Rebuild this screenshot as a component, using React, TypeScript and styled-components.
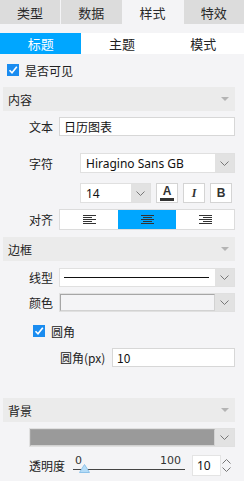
import React from "react"
import styled, { createGlobalStyle } from "styled-components"

const GlobalStyle = createGlobalStyle`
  html, body {
    margin: 0;
    padding: 0;
    background: #f4f4f6;
  }
  body {
    font-family: "Noto Sans CJK SC", "Noto Sans", sans-serif;
    font-size: 12px;
    color: #333;
  }
`

const Page = styled.div`
  width: 244px;
  height: 481px;
  overflow: hidden;
  background: #f4f4f6;
`

const Tabs = styled.div`
  display: grid;
  grid-template-columns: repeat(4, 1fr);
  column-gap: 1px;
  height: 24px;
`

const Tab = styled.div<{ $active?: boolean }>`
  display: flex;
  align-items: center;
  justify-content: center;
  font-size: 13px;
  color: #2a2a2a;
  background: ${(p) => (p.$active ? "transparent" : "#dcdcdc")};
`

const SubTabs = styled.div`
  display: grid;
  grid-template-columns: repeat(3, 1fr);
  height: 21px;
  margin-top: 9px;
`

const SubTab = styled.div<{ $active?: boolean }>`
  display: flex;
  align-items: center;
  justify-content: center;
  font-size: 13px;
  background: ${(p) => (p.$active ? "#00a6ff" : "#ffffff")};
  color: ${(p) => (p.$active ? "#ffffff" : "#222")};
`

const Panel = styled.div`
  width: 235px;
  display: flex;
  flex-direction: column;
`

const Row = styled.div<{ $mt: number; $h: number; $pl?: number }>`
  display: flex;
  align-items: center;
  margin-top: ${(p) => p.$mt}px;
  height: ${(p) => p.$h}px;
  padding-left: ${(p) => p.$pl ?? 29}px;
`

const Label = styled.span<{ $w: number }>`
  flex: 0 0 ${(p) => p.$w}px;
  font-size: 12px;
  color: #222;
  white-space: nowrap;
`

const CheckLabel = styled.label`
  display: flex;
  align-items: center;
  gap: 6px;
  font-size: 12px;
  color: #222;
`

const Box = styled.span`
  width: 12px;
  height: 12px;
  background: #1a8cf0;
  display: flex;
  align-items: center;
  justify-content: center;
`

const Header = styled.div<{ $mt: number }>`
  margin: ${(p) => p.$mt}px 0 0 3px;
  height: 24px;
  background: #ebebeb;
  display: flex;
  align-items: center;
  justify-content: space-between;
  padding: 0 6px 0 5px;
  font-size: 12px;
  color: #222;
`

const Caret = styled.span`
  width: 0;
  height: 0;
  border-left: 4px solid transparent;
  border-right: 4px solid transparent;
  border-top: 4px solid #b4b4b4;
`

const TextInput = styled.div`
  flex: 1;
  height: 100%;
  box-sizing: border-box;
  border: 1px solid #d7d7d7;
  background: #fff;
  display: flex;
  align-items: center;
  padding-left: 4px;
  font-size: 12px;
  color: #111;
`

const Select = styled.div<{ $w?: number }>`
  ${(p) => (p.$w ? `flex: 0 0 ${p.$w}px;` : "flex: 1;")}
  height: 100%;
  box-sizing: border-box;
  display: flex;
  background: #fff;
  border: 1px solid #e0e0e0;
`

const SelectValue = styled.div`
  flex: 1;
  display: flex;
  align-items: center;
  padding-left: 5px;
  font-family: "Noto Sans", "Noto Sans CJK SC", sans-serif;
  font-size: 12px;
  color: #111;
  overflow: hidden;
`

const SelectArrow = styled.div`
  flex: 0 0 19px;
  background: #e2e2e2;
  display: flex;
  align-items: center;
  justify-content: center;
`

const Swatch = styled.div<{ $color: string }>`
  flex: 1;
  background: ${(p) => p.$color};
  border: 1px solid;
  border-color: #a6a6a6 #d2d2d2 #d2d2d2 #a6a6a6;
`

const LineSample = styled.div`
  flex: 1;
  display: flex;
  align-items: center;
  padding: 0 6px 0 4px;
  &::before {
    content: "";
    flex: 1;
    border-top: 1px solid #111;
  }
`

const StyleButton = styled.div`
  flex: 0 0 22px;
  height: 100%;
  margin-left: 5px;
  box-sizing: border-box;
  border: 1px solid #d4d4d4;
  background: #fff;
  display: flex;
  flex-direction: column;
  align-items: center;
  justify-content: center;
  color: #333;
`

const ButtonGlyph = styled.span<{ $italic?: boolean }>`
  font-family: ${(p) => (p.$italic ? '"Liberation Serif", serif' : '"Liberation Sans", sans-serif')};
  font-style: ${(p) => (p.$italic ? "italic" : "normal")};
  font-weight: bold;
  font-size: 12px;
  line-height: 11px;
`

const ColorBar = styled.span`
  width: 14px;
  height: 3px;
  margin-top: 1px;
  background: #333;
`

const Segments = styled.div`
  flex: 1;
  height: 100%;
  display: grid;
  grid-template-columns: repeat(3, 1fr);
  box-sizing: border-box;
  border: 1px solid #dcdcdc;
  background: #fff;
`

const Segment = styled.div<{ $active?: boolean }>`
  display: flex;
  align-items: center;
  justify-content: center;
  background: ${(p) => (p.$active ? "#00a6ff" : "transparent")};
`

const Slider = styled.div`
  flex: 0 0 112px;
  height: 100%;
  position: relative;
  display: flex;
  justify-content: space-between;
  align-items: flex-start;
  border-bottom: 1px solid #444;
  box-sizing: border-box;
  margin-left: 0;
  font-family: "DejaVu Sans", sans-serif;
  font-size: 11px;
  line-height: 11px;
  color: #333;
  padding: 0 4px 0 2px;
  height: 15px;
  align-self: flex-start;
  margin-top: 0px;
`

const Thumb = styled.svg`
  position: absolute;
  left: 6px;
  bottom: -4px;
`

const Spinner = styled.div`
  margin-left: 7px;
  width: 29px;
  height: 100%;
  box-sizing: border-box;
  background: #fff;
  border: 1px solid #e4e4e4;
  display: flex;
  align-items: center;
  padding-left: 4px;
  font-family: "Noto Sans", sans-serif;
  font-size: 12px;
  color: #111;
`

const SpinArrows = styled.div`
  margin-left: 1px;
  display: flex;
  flex-direction: column;
  gap: 3px;
`

const Chevron = ({ up }: { up?: boolean }) => (
  <svg width="9" height="5" viewBox="0 0 9 5">
    <path
      d={up ? "M0.5 4.5 L4.5 0.5 L8.5 4.5" : "M0.5 0.5 L4.5 4.5 L8.5 0.5"}
      stroke="#777"
      fill="none"
    />
  </svg>
)

const Check = () => (
  <Box>
    <svg width="10" height="10" viewBox="0 0 10 10">
      <path d="M1.5 5.2 L4 7.8 L8.8 1.8" stroke="#fff" strokeWidth="1.6" fill="none" />
    </svg>
  </Box>
)

// lines of a text-align icon: long/short alternating
const AlignIcon = ({ align }: { align: "left" | "center" | "right" }) => {
  const long = 13
  const short = 9
  const ys = [0.5, 2.5, 4.5, 6.5, 8.5]
  return (
    <svg width="13" height="9" viewBox="0 0 13 9">
      {ys.map((y, i) => {
        const w = i % 2 === 0 ? long : short
        const x = align === "left" ? 0 : align === "center" ? (13 - w) / 2 : 13 - w
        return <line key={y} x1={x} x2={x + w} y1={y} y2={y} stroke="#333" strokeWidth="1" />
      })}
    </svg>
  )
}

const DropSelect = ({ children, w }: { children: React.ReactNode; w?: number }) => (
  <Select $w={w}>
    {children}
    <SelectArrow>
      <Chevron />
    </SelectArrow>
  </Select>
)

export default function App() {
  return (
    <Page>
      <GlobalStyle />
      <Tabs>
        <Tab>类型</Tab>
        <Tab>数据</Tab>
        <Tab $active>样式</Tab>
        <Tab>特效</Tab>
      </Tabs>
      <SubTabs>
        <SubTab $active>标题</SubTab>
        <SubTab>主题</SubTab>
        <SubTab>模式</SubTab>
      </SubTabs>
      <Panel>
        <Row $mt={10} $h={12} $pl={7}>
          <CheckLabel>
            <Check />
            是否可见
          </CheckLabel>
        </Row>

        {/* 内容 */}
        <Header $mt={11}>
          内容
          <Caret />
        </Header>
        <Row $mt={6} $h={19}>
          <Label $w={30}>文本</Label>
          <TextInput>日历图表</TextInput>
        </Row>
        <Row $mt={17} $h={20}>
          <Label $w={51}>字符</Label>
          <DropSelect>
            <SelectValue>Hiragino Sans GB</SelectValue>
          </DropSelect>
        </Row>
        <Row $mt={10} $h={20} $pl={80}>
          <DropSelect w={71}>
            <SelectValue>14</SelectValue>
          </DropSelect>
          <StyleButton>
            <ButtonGlyph>A</ButtonGlyph>
            <ColorBar />
          </StyleButton>
          <StyleButton>
            <ButtonGlyph $italic>I</ButtonGlyph>
          </StyleButton>
          <StyleButton>
            <ButtonGlyph>B</ButtonGlyph>
          </StyleButton>
        </Row>
        <Row $mt={6} $h={21}>
          <Label $w={30}>对齐</Label>
          <Segments>
            <Segment>
              <AlignIcon align="left" />
            </Segment>
            <Segment $active>
              <AlignIcon align="center" />
            </Segment>
            <Segment>
              <AlignIcon align="right" />
            </Segment>
          </Segments>
        </Row>

        {/* 边框 */}
        <Header $mt={7}>
          边框
          <Caret />
        </Header>
        <Row $mt={7} $h={19}>
          <Label $w={30}>线型</Label>
          <DropSelect>
            <LineSample />
          </DropSelect>
        </Row>
        <Row $mt={6} $h={19}>
          <Label $w={30}>颜色</Label>
          <DropSelect>
            <Swatch $color="#f4f4f6" />
          </DropSelect>
        </Row>
        <Row $mt={13} $h={12} $pl={33}>
          <CheckLabel>
            <Check />
            圆角
          </CheckLabel>
        </Row>
        <Row $mt={11} $h={19} $pl={60}>
          <Label $w={52}>圆角(px)</Label>
          <TextInput>10</TextInput>
        </Row>

        {/* 背景 */}
        <Header $mt={31}>
          背景
          <Caret />
        </Header>
        <Row $mt={6} $h={19}>
          <DropSelect>
            <Swatch $color="#9a9a9a" />
          </DropSelect>
        </Row>
        <Row $mt={8} $h={21}>
          <Label $w={44}>透明度</Label>
          <Slider>
            <span>0</span>
            <span>100</span>
            <Thumb width="11" height="9" viewBox="0 0 11 9">
              <path d="M5.5 0.5 L10.5 8.5 L0.5 8.5 Z" fill="#b5dcf7" stroke="#8ec3ea" />
            </Thumb>
          </Slider>
          <Spinner>10</Spinner>
          <SpinArrows>
            <Chevron up />
            <Chevron />
          </SpinArrows>
        </Row>
      </Panel>
    </Page>
  )
}
